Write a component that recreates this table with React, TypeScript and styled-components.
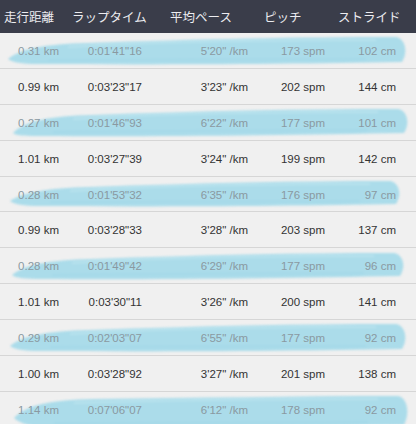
import React from 'react';
import styled, { createGlobalStyle } from 'styled-components';

interface Stroke {
  x0: number;
  tip: number;
  topL: number;
  topR: number;
  botL: number;
  botR: number;
  xEnd: number;
}

interface Lap {
  distance: string;
  time: string;
  pace: string;
  pitch: string;
  stride: string;
  highlight?: Stroke;
}

const laps: Lap[] = [
  { distance: '0.31 km', time: `0:01'41"16`, pace: `5'20" /km`, pitch: '173 spm', stride: '102 cm',
    highlight: { x0: 8, tip: 26, topL: 11, topR: 4, botL: 31, botR: 30, xEnd: 406 } },
  { distance: '0.99 km', time: `0:03'23"17`, pace: `3'23" /km`, pitch: '202 spm', stride: '144 cm' },
  { distance: '0.27 km', time: `0:01'46"93`, pace: `6'22" /km`, pitch: '177 spm', stride: '101 cm',
    highlight: { x0: 13, tip: 28, topL: 11, topR: 4, botL: 31, botR: 29, xEnd: 408 } },
  { distance: '1.01 km', time: `0:03'27"39`, pace: `3'24" /km`, pitch: '199 spm', stride: '142 cm' },
  { distance: '0.28 km', time: `0:01'53"32`, pace: `6'35" /km`, pitch: '176 spm', stride: '97 cm',
    highlight: { x0: 10, tip: 24, topL: 11, topR: 4, botL: 29, botR: 28, xEnd: 400 } },
  { distance: '0.99 km', time: `0:03'28"33`, pace: `3'28" /km`, pitch: '203 spm', stride: '137 cm' },
  { distance: '0.28 km', time: `0:01'49"42`, pace: `6'29" /km`, pitch: '177 spm', stride: '96 cm',
    highlight: { x0: 12, tip: 27, topL: 12, topR: 5, botL: 31, botR: 29, xEnd: 404 } },
  { distance: '1.01 km', time: `0:03'30"11`, pace: `3'26" /km`, pitch: '200 spm', stride: '141 cm' },
  { distance: '0.29 km', time: `0:02'03"07`, pace: `6'55" /km`, pitch: '177 spm', stride: '92 cm',
    highlight: { x0: 10, tip: 26, topL: 11, topR: 4, botL: 31, botR: 30, xEnd: 406 } },
  { distance: '1.00 km', time: `0:03'28"92`, pace: `3'27" /km`, pitch: '201 spm', stride: '138 cm' },
  { distance: '1.14 km', time: `0:07'06"07`, pace: `6'12" /km`, pitch: '178 spm', stride: '92 cm',
    highlight: { x0: 14, tip: 26, topL: 8, topR: 4, botL: 35, botR: 34, xEnd: 408 } },
];

const headers = ['走行距離', 'ラップタイム', '平均ペース', 'ピッチ', 'ストライド'];

const GlobalStyle = createGlobalStyle`
  html, body {
    margin: 0;
    padding: 0;
    background: #f0f0f0;
  }
  body {
    font-family: "Liberation Sans", Arial, sans-serif;
    overflow: hidden;
  }
`;

const Table = styled.div`
  width: 416px;
  height: 424px;
  overflow: hidden;
  background: #f0f0f0;
`;

const HeaderRow = styled.div`
  display: grid;
  grid-template-columns: 68px 98px 94px 74px 1fr;
  align-items: center;
  height: 33px;
  padding-left: 4px;
  background: #3a3d4a;
`;

const HeaderCell = styled.div`
  font-family: "Noto Sans CJK JP", "Noto Sans", sans-serif;
  font-size: 12.5px;
  color: #ececf0;
  white-space: nowrap;
`;

const Row = styled.div`
  position: relative;
  display: grid;
  grid-template-columns: 59px 83px 106px 77px 71px 1fr;
  align-items: center;
  height: 35.9px;
  box-sizing: border-box;
  border-bottom: 1px solid #d6d6d6;
  padding-top: 1px;
`;

const Cell = styled.div<{ $faded: boolean }>`
  position: relative;
  z-index: 1;
  text-align: right;
  font-size: 11.5px;
  white-space: nowrap;
  color: ${p => (p.$faded ? '#8a99a1' : '#333333')};
`;

const BrushSvg = styled.svg`
  position: absolute;
  left: 0;
  top: 0;
  width: 416px;
  height: 36px;
  overflow: visible;
  z-index: 0;
  filter: blur(1.1px);
`;

const strokePath = (s: Stroke) => {
  const { x0, tip, topL, topR, botL, botR, xEnd } = s;
  return [
    `M${x0},${tip}`,
    `C${x0 + 12},${topL + 5} ${x0 + 36},${topL} ${x0 + 80},${topL - 1}`,
    `C200,${topR + 2} 300,${topR} ${xEnd - 10},${topR}`,
    `C${xEnd - 2},${topR + 1} ${xEnd + 3},${(topR + botR) / 2} ${xEnd - 4},${botR - 1}`,
    `C300,${botR + 1} 150,${botL + 1} ${x0 + 30},${botL}`,
    `C${x0 + 14},${botL} ${x0 + 3},${tip + 3} ${x0},${tip}`,
    'Z',
  ].join(' ');
};

const Brush: React.FC<{ stroke: Stroke }> = ({ stroke }) => (
  <BrushSvg viewBox="0 0 416 36">
    <path d={strokePath(stroke)} fill="#abdcea" />
    <path
      d={`M${stroke.x0 + 60},${stroke.topL + 3} C160,${stroke.topR + 4} 280,${stroke.topR + 3} ${stroke.xEnd - 30},${stroke.topR + 3}`}
      stroke="#bfe6f0"
      strokeWidth="2"
      fill="none"
      opacity="0.7"
    />
    <path
      d={`M${stroke.x0 + 40},${stroke.botL - 4} C160,${stroke.botR - 3} 280,${stroke.botR - 4} ${stroke.xEnd - 40},${stroke.botR - 4}`}
      stroke="#a2d7e7"
      strokeWidth="2"
      fill="none"
      opacity="0.6"
    />
  </BrushSvg>
);

export default function App() {
  return (
    <>
      <GlobalStyle />
      <Table>
        <HeaderRow>
          {headers.map(h => (
            <HeaderCell key={h}>{h}</HeaderCell>
          ))}
        </HeaderRow>
        {laps.map((lap, i) => {
          const faded = !!lap.highlight;
          return (
            <Row key={i}>
              {lap.highlight && <Brush stroke={lap.highlight} />}
              <Cell $faded={faded}>{lap.distance}</Cell>
              <Cell $faded={faded}>{lap.time}</Cell>
              <Cell $faded={faded}>{lap.pace}</Cell>
              <Cell $faded={faded}>{lap.pitch}</Cell>
              <Cell $faded={faded}>{lap.stride}</Cell>
            </Row>
          );
        })}
      </Table>
    </>
  );
}
